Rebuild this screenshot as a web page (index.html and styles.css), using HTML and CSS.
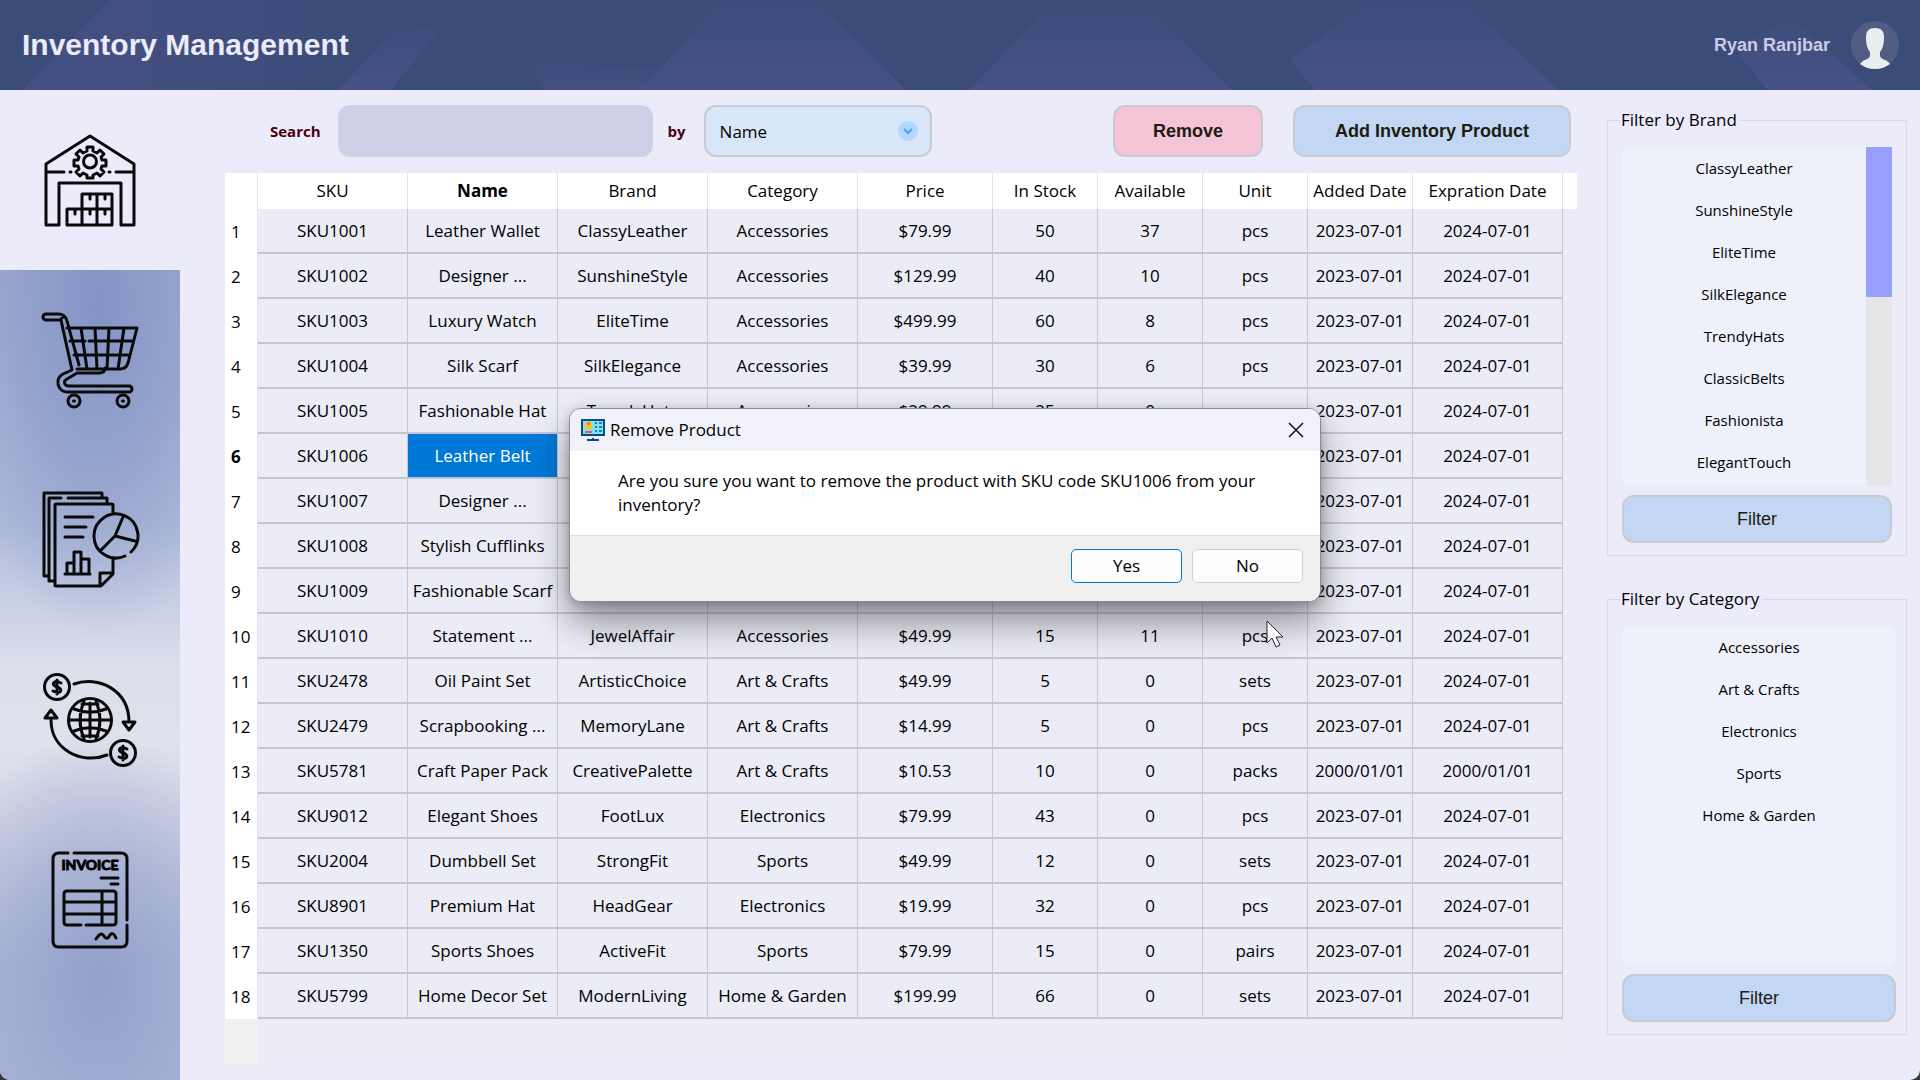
FILE: index.html
```html
<!DOCTYPE html>
<html lang="en">
<head>
<meta charset="utf-8">
<title>Inventory Management</title>
<link rel="stylesheet" href="styles.css">
</head>
<body>
<div class="app">
<header class="topbar">
  <svg class="topbar-art" viewBox="0 0 1920 90" preserveAspectRatio="none" aria-hidden="true">
    <defs><linearGradient id="beam" x1="0" y1="0" x2="0" y2="1"><stop offset="0" stop-color="#465184" stop-opacity=".15"/><stop offset="1" stop-color="#475286"/></linearGradient>
    <linearGradient id="fade" x1="0" y1="0" x2="1" y2="0"><stop offset="0" stop-color="#465184" stop-opacity=".9"/><stop offset="1" stop-color="#465184" stop-opacity="0"/></linearGradient></defs>
    <path fill="url(#fade)" d="M22 90L110 0H330L340 90Z"/>
    <g fill="url(#beam)"><path d="M338 90L400 25L440 30L390 90Z"/><path d="M546 90L522 60L660 70L642 90Z" opacity=".6"/><path d="M642 90L720 0H815L906 90Z"/><path d="M969 90L1050 5L1150 10L1232 90Z"/><path d="M1315 90L1290 60L1370 0H1465L1558 90Z"/><path d="M1768 90L1735 50L1790 15L1872 90Z"/></g>
  </svg>
  <h1>Inventory Management</h1>
  <div class="user"><span>Ryan Ranjbar</span>
    <svg width="48" height="48" viewBox="0 0 48 48" aria-hidden="true"><circle cx="24" cy="24" r="24" fill="#515d82"/><path d="M24 7c6 0 9 3 9 9 0 7-1 11-4 15v4c1 4 7 3 10 8-4 3-9 5-15 5s-11-2-15-5c3-5 9-4 10-8v-4c-3-4-4-8-4-15 0-6 3-9 9-9z" fill="#e8efee"/></svg>
  </div>
</header>
<div class="body">
<nav class="sidebar" aria-label="Sections">
  <a href="#inventory" class="nav-item active" aria-label="Inventory"><svg viewBox="0 0 96 96"><path d="M4 93V32L48 4l44 28v61H79V51H17v42zM6 40h16M74 40h16M28 40h1M67 40h1M25 93V77h45v16zM40 77V62h30v15M55 62v31M40 77v16M48 62v5M63 62v5M33 77v5M48 77v5M63 77v5"/><circle cx="48" cy="29.500" r="6.500"/><path d="M45 15h6v4l4 2 3-3 4 4-3 3 1 3h4v6h-4l-1 3 3 3-4 4-3-3-4 2v3h-6v-3l-4-2-3 3-4-4 3-3-1-3h-4v-6h4l1-3-3-3 4-4 3 3 4-2z"/></svg></a>
  <a href="#orders" class="nav-item" aria-label="Orders"><svg viewBox="0 0 96 96"><path d="M4 2h12c5 0 8 3 9 7l12 44M25 16h70L86 51q-2 6-8 6H35M19 8H4a3 3 0 0 1 0-6M19 8l11 50-9 4c-9 5-5 18 4 18h62a3 3 0 0 0 0-6H27c-5 0-6-5-2-7l10-6h22q6 0 6-5M19 7l3-3M28 29h15M47 29h43M32 43h54M39 16l6 41M53 16l2 41M67 16l-2 41M82 16l-6 41"/><circle cx="32" cy="89" r="6"/><circle cx="81" cy="89" r="6"/><path d="M31.500 89h1M80.500 89h1"/></svg></a>
  <a href="#reports" class="nav-item" aria-label="Reports"><svg viewBox="0 0 96 96"><path d="M71 20V13q0-1-1-1H14q-1 0-1 1v80q0 1 1 1h45l12-12V67M58 94V81h13M6 84H2V1h58v5M12 89H7V6h12M26 6h39v5M23 25h28M23 35h21M23 45h18M23 82h25M25 82V71h6M32 82V60h7v22M40 67h7v15M83 64A22 22 0 1 1 89 60M73 44L81 25M73 44l20 5M73 44L58 59"/></svg></a>
  <a href="#finance" class="nav-item" aria-label="Finance"><svg viewBox="0 0 96 96"><circle cx="15" cy="15" r="12.500"/><circle cx="81" cy="81" r="12.500"/><circle cx="48" cy="48" r="21.500"/><path d="M32 12c24-9 55 6 55 38M65 83C40 93 9 78 9 48M81 50h12l-6 8zM3 46h12L9 38zM27 48h42M48 31v34M40 32h16M40 64h16M32 37c10 4 22 4 32 0M32 59c10-4 22-4 32 0M42 29c-5 12-5 26 0 38M54 29c5 12 5 26 0 38M19 11c-7-4-11 2-4 4s4 8-4 4M15 8v14M85 77c-7-4-11 2-4 4s4 8-4 4M81 74v14"/></svg></a>
  <a href="#invoices" class="nav-item" aria-label="Invoices"><svg viewBox="0 0 96 96"><path d="M26 1h-9q-6 0-6 6v82q0 6 6 6h62q6 0 6-6V73M32 1h47q6 0 6 6v61M59 26h17M69 32h7M39 73H25q-3 0-3-3V42q0-3 3-3h46q3 0 3 3v28q0 3-3 3H44M22 50h52M22 62h52M60 39v34M54 87q5-8 8-3t6-1q3-4 6 3"/><text x="48" y="18" text-anchor="middle">INVOICE</text></svg></a>
</nav>
<main class="content">
  <form class="toolbar">
    <label class="bold-label" for="q">Search</label><input id="q" class="search" type="text">
    <label class="bold-label" for="by">by</label>
    <span class="select-wrap"><select id="by" class="select"><option>Name</option><option>SKU</option><option>Brand</option></select><svg width="20" height="20" viewBox="0 0 20 20" aria-hidden="true"><circle cx="10" cy="10" r="10" fill="#b4d7fd"/><path d="M6 8l4 4 4-4" fill="none" stroke="#4da0f5" stroke-width="2"/></svg></span>
    <button type="button" class="btn remove">Remove</button><button type="button" class="btn add">Add Inventory Product</button>
  </form>
  <div class="table-area">
  <table>
    <colgroup><col class="c-num"><col class="c-l"><col class="c-l"><col class="c-l"><col class="c-l"><col class="c-m"><col class="c-s"><col class="c-s"><col class="c-s"><col class="c-s"><col class="c-l"><col></colgroup>
    <thead><tr><td></td><th>SKU</th><th class="sorted">Name</th><th>Brand</th><th>Category</th><th>Price</th><th>In Stock</th><th>Available</th><th>Unit</th><th>Added Date</th><th>Expration Date</th><td></td></tr></thead>
    <tbody>
<tr><th>1</th><td>SKU1001</td><td>Leather Wallet</td><td>ClassyLeather</td><td>Accessories</td><td>$79.99</td><td>50</td><td>37</td><td>pcs</td><td>2023-07-01</td><td>2024-07-01</td></tr>
<tr><th>2</th><td>SKU1002</td><td>Designer ...</td><td>SunshineStyle</td><td>Accessories</td><td>$129.99</td><td>40</td><td>10</td><td>pcs</td><td>2023-07-01</td><td>2024-07-01</td></tr>
<tr><th>3</th><td>SKU1003</td><td>Luxury Watch</td><td>EliteTime</td><td>Accessories</td><td>$499.99</td><td>60</td><td>8</td><td>pcs</td><td>2023-07-01</td><td>2024-07-01</td></tr>
<tr><th>4</th><td>SKU1004</td><td>Silk Scarf</td><td>SilkElegance</td><td>Accessories</td><td>$39.99</td><td>30</td><td>6</td><td>pcs</td><td>2023-07-01</td><td>2024-07-01</td></tr>
<tr><th>5</th><td>SKU1005</td><td>Fashionable Hat</td><td>TrendyHats</td><td>Accessories</td><td>$29.99</td><td>25</td><td>0</td><td>pcs</td><td>2023-07-01</td><td>2024-07-01</td></tr>
<tr><th class="current">6</th><td>SKU1006</td><td class="selected">Leather Belt</td><td></td><td></td><td></td><td></td><td></td><td></td><td>2023-07-01</td><td>2024-07-01</td></tr>
<tr><th>7</th><td>SKU1007</td><td>Designer ...</td><td></td><td></td><td></td><td></td><td></td><td></td><td>2023-07-01</td><td>2024-07-01</td></tr>
<tr><th>8</th><td>SKU1008</td><td>Stylish Cufflinks</td><td></td><td></td><td></td><td></td><td></td><td></td><td>2023-07-01</td><td>2024-07-01</td></tr>
<tr><th>9</th><td>SKU1009</td><td>Fashionable Scarf</td><td></td><td></td><td></td><td></td><td></td><td></td><td>2023-07-01</td><td>2024-07-01</td></tr>
<tr><th>10</th><td>SKU1010</td><td>Statement ...</td><td>JewelAffair</td><td>Accessories</td><td>$49.99</td><td>15</td><td>11</td><td>pcs</td><td>2023-07-01</td><td>2024-07-01</td></tr>
<tr><th>11</th><td>SKU2478</td><td>Oil Paint Set</td><td>ArtisticChoice</td><td>Art &amp; Crafts</td><td>$49.99</td><td>5</td><td>0</td><td>sets</td><td>2023-07-01</td><td>2024-07-01</td></tr>
<tr><th>12</th><td>SKU2479</td><td>Scrapbooking ...</td><td>MemoryLane</td><td>Art &amp; Crafts</td><td>$14.99</td><td>5</td><td>0</td><td>pcs</td><td>2023-07-01</td><td>2024-07-01</td></tr>
<tr><th>13</th><td>SKU5781</td><td>Craft Paper Pack</td><td>CreativePalette</td><td>Art &amp; Crafts</td><td>$10.53</td><td>10</td><td>0</td><td>packs</td><td>2000/01/01</td><td>2000/01/01</td></tr>
<tr><th>14</th><td>SKU9012</td><td>Elegant Shoes</td><td>FootLux</td><td>Electronics</td><td>$79.99</td><td>43</td><td>0</td><td>pcs</td><td>2023-07-01</td><td>2024-07-01</td></tr>
<tr><th>15</th><td>SKU2004</td><td>Dumbbell Set</td><td>StrongFit</td><td>Sports</td><td>$49.99</td><td>12</td><td>0</td><td>sets</td><td>2023-07-01</td><td>2024-07-01</td></tr>
<tr><th>16</th><td>SKU8901</td><td>Premium Hat</td><td>HeadGear</td><td>Electronics</td><td>$19.99</td><td>32</td><td>0</td><td>pcs</td><td>2023-07-01</td><td>2024-07-01</td></tr>
<tr><th>17</th><td>SKU1350</td><td>Sports Shoes</td><td>ActiveFit</td><td>Sports</td><td>$79.99</td><td>15</td><td>0</td><td>pairs</td><td>2023-07-01</td><td>2024-07-01</td></tr>
<tr><th>18</th><td>SKU5799</td><td>Home Decor Set</td><td>ModernLiving</td><td>Home &amp; Garden</td><td>$199.99</td><td>66</td><td>0</td><td>sets</td><td>2023-07-01</td><td>2024-07-01</td></tr>
    </tbody>
  </table>
  <div class="table-rest"></div>
  </div>
</main>
<aside class="filters">
  <fieldset><legend>Filter by Brand</legend>
    <div class="list-box scrolls"><ul><li>ClassyLeather</li><li>SunshineStyle</li><li>EliteTime</li><li>SilkElegance</li><li>TrendyHats</li><li>ClassicBelts</li><li>Fashionista</li><li>ElegantTouch</li></ul><div class="track"><div class="thumb"></div></div></div>
    <button type="button" class="btn filter">Filter</button>
  </fieldset>
  <fieldset class="wide"><legend>Filter by Category</legend>
    <div class="list-box"><ul><li>Accessories</li><li>Art &amp; Crafts</li><li>Electronics</li><li>Sports</li><li>Home &amp; Garden</li></ul></div>
    <button type="button" class="btn filter">Filter</button>
  </fieldset>
</aside>
</div>
</div>
<div class="dialog" role="dialog" aria-labelledby="dlg-title">
  <div class="dlg-head">
    <svg width="24" height="24" viewBox="0 0 24 24" aria-hidden="true"><path d="M0 1h24v17H0z" fill="#0c4a86"/><path d="M2 3h20v13H2z" fill="#7fe3f5"/><path d="M4 4h7v7H4z" fill="#fdbf3c"/><path d="M6 4h3v3H6z" fill="#f08a24"/><path d="M4 13h7v2H4z" fill="#f2545b"/><path d="M14 5h2M18 5h3M14 9h2M18 9h3M14 13h2M18 13h3" stroke="#1f86b0" stroke-width="2"/><path d="M11 20h2v1h5v2H6v-2h5z" fill="#0c4a86"/></svg>
    <h2 id="dlg-title">Remove Product</h2>
    <button type="button" class="close" aria-label="Close"><svg width="16" height="16" viewBox="0 0 16 16"><path d="M1 1l14 14M15 1L1 15" stroke="#111" stroke-width="1.500"/></svg></button>
  </div>
  <p>Are you sure you want to remove the product with SKU code SKU1006 from your inventory?</p>
  <div class="dlg-foot"><button type="button" class="dlg-btn primary">Yes</button><button type="button" class="dlg-btn">No</button></div>
</div>
<svg class="cursor" width="18" height="28" viewBox="0 0 18 28" aria-hidden="true"><path d="M1 1v22l5-5 4 9 4-2-4-8h7z" fill="#fff" stroke="#222"/></svg>
</body>
</html>
```
FILE: styles.css
```css
* { box-sizing: border-box; }
body { margin: 0; background: #33383d; color: #000; font: 17px/24px "Open Sans", "Noto Sans", sans-serif; }
h1, h2, p, ul { margin: 0; padding: 0; font-weight: 400; }
h2 { font-size: 17px; }
button, input, select { font: inherit; color: inherit; }
.app { min-height: 100vh; display: flex; flex-direction: column; background: #ebebfa; border-radius: 0 0 10px 10px; overflow: hidden; }

.topbar { position: relative; height: 90px; padding: 0 21px 0 22px; display: flex; align-items: center; justify-content: space-between; background: #3c4c79; font-family: "Liberation Sans", sans-serif; }
.topbar-art { position: absolute; inset: 0; width: 100%; height: 100%; }
.topbar h1 { position: relative; font-size: 30px; font-weight: 700; color: #ebebfa; }
.user { position: relative; display: flex; align-items: center; gap: 21px; font-size: 18px; font-weight: 700; color: #c9cbe6; }

.body { flex: 1; display: flex; }
.sidebar { width: 180px; display: flex; flex-direction: column; background: radial-gradient(ellipse 150px 330px at 55% 22%, #8494c4, #8897c8a0 50%, #8797c800), radial-gradient(ellipse 170px 250px at 55% 90%, #93a0ca, #96a3cd90 50%, #94a2cc00), linear-gradient(#a3afd0 18%, #b0bcdb 44%, #dbdfeb 58%, #dfe2ec 66%, #cdd2e2 76%, #b1bbd8 88%, #adb8d8); }
.nav-item { height: 180px; display: flex; align-items: center; justify-content: center; }
.nav-item.active { background: #ebebfa; }
.nav-item svg { width: 96px; height: 96px; fill: none; stroke: #0a0a0a; stroke-width: 3; stroke-linecap: round; stroke-linejoin: round; overflow: visible; }
.nav-item text { fill: #000; stroke: #000; stroke-width: 1; font: 700 14px "Lato", sans-serif; }

.content { flex: 1; padding: 15px 0 15px 45px; display: flex; flex-direction: column; gap: 16px; }
.toolbar { height: 52px; display: flex; align-items: center; padding: 0 6px 0 45px; }
.bold-label { font-size: 15px; font-weight: 700; color: #4a0010; }
.search { flex: 1; max-width: 315px; height: 52px; margin: 0 15px 0 17px; border: 0; border-radius: 12px; background: #cdd0e7; padding: 0 15px; }
.select-wrap { position: relative; width: 228px; margin: 0 auto 0 18px; }
.select { appearance: none; width: 100%; height: 52px; padding: 2px 14px 0; border: 2px solid #c8cbd0; border-radius: 12px; background: #d8e6f9; }
.select-wrap svg { position: absolute; right: 14px; top: 16px; }
.btn { border: 2px solid #c8cbd0; border-radius: 12px; background: #c3d6f4; color: #1c1c10; font: 18px "Liberation Sans", sans-serif; }
.remove, .add { height: 52px; font-weight: 700; }
.remove { width: 150px; margin-right: 30px; background: #f4c3d6; }
.add { width: 278px; }

.table-area { flex: 1; display: flex; flex-direction: column; background: #ebecf6; }
table { width: 100%; table-layout: fixed; border-collapse: separate; border-spacing: 0; text-align: center; }
.c-num { width: 33px; } .c-l { width: 150px; } .c-m { width: 135px; } .c-s { width: 105px; }
th, td { padding: 0; font-weight: 400; white-space: nowrap; }
thead th, thead td { height: 36px; background: #fff; border-right: 1px solid #e2e2e8; }
thead td:last-child { border: 0; }
thead .sorted, tbody .current { font-weight: 700; }
tbody td { height: 45px; border-right: 1px solid #c6c6d2; border-bottom: 2px solid #c6c6d2; }
tbody th { background: #fff; border-right: 1px solid #e2e2e8; text-align: left; padding-left: 6px; }
tbody .selected { background: #0078d7; color: #fff; }
.table-rest { flex: 1; width: 33px; background: #f0f0f0; }

.filters { width: 343px; padding: 18px 13px 0 30px; display: flex; flex-direction: column; gap: 31px; }
fieldset { min-width: 0; margin: 0; height: 448px; padding: 15px 14px 12px; border: 1px solid #dadade; display: flex; flex-direction: column; gap: 9px; }
fieldset.wide { padding-right: 10px; }
legend { padding: 0 3px 0 1px; margin-left: -2px; }
.list-box { height: 339px; display: flex; background: #eef1fa; border-radius: 8px; }
.list-box.scrolls { border-radius: 8px 0 0 8px; }
.list-box ul { flex: 1; list-style: none; text-align: center; font-size: 15px; line-height: 42px; }
.track { width: 26px; background: #e6e6e8; }
.thumb { height: 150px; background: #999fff; }
.filter { height: 48px; }

.dialog { position: absolute; left: 569px; top: 408px; width: 752px; height: 194px; display: flex; flex-direction: column; background: #fff; border: 1px solid #8b8c90; border-radius: 12px; overflow: hidden; box-shadow: 0 20px 36px #0006, 0 2px 10px #0003; }
.dlg-head { height: 43px; padding: 0 16px 0 11px; display: flex; align-items: center; gap: 5px; background: #f1f2f9; }
.close { margin-left: auto; padding: 0; border: 0; background: none; display: flex; }
.dialog p { flex: 1; padding: 18px 48px; }
.dlg-foot { height: 67px; padding: 13px 17px 0; display: flex; justify-content: flex-end; gap: 10px; background: #f0f0f0; border-top: 1px solid #dfdfdf; }
.dlg-btn { width: 111px; height: 34px; padding: 0; background: #fdfdfd; border: 1px solid #d0d0d0; border-radius: 5px; }
.dlg-btn.primary { border-color: #0078d4; }
.cursor { position: absolute; left: 1266px; top: 620px; }
```
